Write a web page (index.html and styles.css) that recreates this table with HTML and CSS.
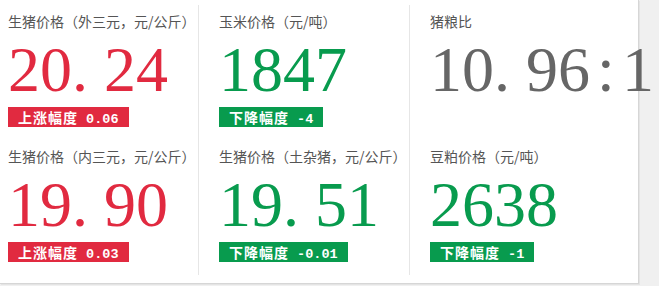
FILE: index.html
```html
<!DOCTYPE html>
<html lang="zh-CN">
<head>
<meta charset="utf-8">
<title>生猪价格</title>
<link rel="stylesheet" href="styles.css">
</head>
<body>
<div class="panel">
  <div class="col col-1">
    <div class="cell">
      <div class="label">生猪价格（外三元，元/公斤）</div>
      <div class="num up">20<span class="dot">.</span>24</div>
      <div class="tag up-bg">上涨幅度<span class="v"> 0.06</span></div>
    </div>
    <div class="cell">
      <div class="label">生猪价格（内三元，元/公斤）</div>
      <div class="num up">19<span class="dot">.</span>90</div>
      <div class="tag up-bg">上涨幅度<span class="v"> 0.03</span></div>
    </div>
  </div>
  <div class="col col-2">
    <div class="cell">
      <div class="label">玉米价格（元/吨）</div>
      <div class="num down">1847</div>
      <div class="tag down-bg">下降幅度<span class="v"> -4</span></div>
    </div>
    <div class="cell">
      <div class="label">生猪价格（土杂猪，元/公斤）</div>
      <div class="num down">19<span class="dot">.</span>51</div>
      <div class="tag down-bg">下降幅度<span class="v"> -0.01</span></div>
    </div>
  </div>
  <div class="col col-3">
    <div class="cell">
      <div class="label">猪粮比</div>
      <div class="num flat">10<span class="dot">.</span>96<span class="colon">:</span>1</div>
    </div>
    <div class="cell">
      <div class="label">豆粕价格（元/吨）</div>
      <div class="num down">2638</div>
      <div class="tag down-bg">下降幅度<span class="v"> -1</span></div>
    </div>
  </div>
</div>
</body>
</html>
```
FILE: styles.css
```css
html, body {
  margin: 0;
  padding: 0;
}
body {
  background: #f0f0f0;
  width: 659px;
  height: 286px;
  overflow: hidden;
  font-family: "Noto Sans CJK SC", "Liberation Sans", sans-serif;
}
.panel {
  width: 638px;
  height: 283px;
  background: #fff;
  border-right: 1px solid #d6d6d6;
  border-bottom: 1px solid #d6d6d6;
  box-shadow: 1px 1px 0 #e4e4e4;
  display: grid;
  grid-template-columns: 199px 211px 1fr;
  align-items: start;
}
.col {
  box-sizing: border-box;
  margin-top: 5px;
  height: 270px;
  padding-top: 8px;
  min-width: 0;
}
.col-1 {
  padding-left: 8px;
  border-right: 1px solid #e6e6e6;
}
.col-2 {
  padding-left: 20px;
  border-right: 1px solid #e6e6e6;
}
.col-3 {
  padding-left: 20px;
}
.cell {
  height: 135px;
}
.label {
  font-size: 14px;
  line-height: 16px;
  height: 16px;
  color: #555;
  white-space: nowrap;
}
.num {
  margin-top: 9px;
  font-family: "Liberation Serif", "Times New Roman", serif;
  font-size: 64px;
  line-height: 64px;
  height: 64px;
  white-space: nowrap;
}
.num .dot {
  display: inline-block;
  width: 32px;
  text-align: left;
}
.num .colon {
  display: inline-block;
  width: 32px;
  text-align: center;
}
.up { color: #e12a40; }
.down { color: #089b4e; }
.flat { color: #666; }
.tag {
  display: inline-block;
  margin-top: 5px;
  height: 20px;
  line-height: 20px;
  padding: 0 10px 0 10px;
  color: #fff;
  font-size: 14px;
  font-weight: 700;
  letter-spacing: 1px;
  white-space: pre;
  vertical-align: top;
}
.tag .v {
  font-family: "Liberation Mono", monospace;
  font-size: 13.5px;
  letter-spacing: 0;
}
.up-bg { background: #e12a40; }
.down-bg { background: #089b4e; }
```
